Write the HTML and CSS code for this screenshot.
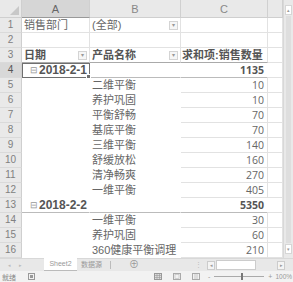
FILE: index.html
```html
<!DOCTYPE html>
<html>
    <head>
        <meta charset="utf-8">
        <title>数据透视表</title>
        <link rel="stylesheet" href="styles.css">
    </head>
    <body>
        <div class="app">
            <div class="main">
                <div class="sheet">
                    <div class="row head">
                        <div class="c num corner"><span class="tri"></span></div>
                        <div class="c a hcol active">A</div>
                        <div class="c b hcol">B</div>
                        <div class="c cc hcol">C</div>
                        <div class="c d hcol"></div>
                    </div>
                    <div class="row">
                        <div class="c num">1</div>
                        <div class="c a">销售部门</div>
                        <div class="c b">(全部)<span class="drop">&#9662;</span></div>
                        <div class="c cc"></div>
                        <div class="c d"></div>
                    </div>
                    <div class="row">
                        <div class="c num">2</div>
                        <div class="c a"></div>
                        <div class="c b"></div>
                        <div class="c cc"></div>
                        <div class="c d"></div>
                    </div>
                    <div class="row pv-head">
                        <div class="c num">3</div>
                        <div class="c a bold">日期<span class="drop">&#9662;</span></div>
                        <div class="c b bold">产品名称<span class="drop">&#9662;</span></div>
                        <div class="c cc bold">求和项:销售数量</div>
                        <div class="c d"></div>
                    </div>
                    <div class="row group">
                        <div class="c num active">4</div>
                        <div class="c a pv sel"><span class="fold">&#8863;</span>2018-2-1<span class="handle"></span></div>
                        <div class="c b pv"></div>
                        <div class="c cc pv val bold">1135</div>
                        <div class="c d"></div>
                    </div>
                    <div class="row">
                        <div class="c num">5</div>
                        <div class="c a pv"></div>
                        <div class="c b pv">二维平衡</div>
                        <div class="c cc val">10</div>
                        <div class="c d"></div>
                    </div>
                    <div class="row">
                        <div class="c num">6</div>
                        <div class="c a pv"></div>
                        <div class="c b pv">养护巩固</div>
                        <div class="c cc val">10</div>
                        <div class="c d"></div>
                    </div>
                    <div class="row">
                        <div class="c num">7</div>
                        <div class="c a pv"></div>
                        <div class="c b pv">平衡舒畅</div>
                        <div class="c cc val">70</div>
                        <div class="c d"></div>
                    </div>
                    <div class="row">
                        <div class="c num">8</div>
                        <div class="c a pv"></div>
                        <div class="c b pv">基底平衡</div>
                        <div class="c cc val">70</div>
                        <div class="c d"></div>
                    </div>
                    <div class="row">
                        <div class="c num">9</div>
                        <div class="c a pv"></div>
                        <div class="c b pv">三维平衡</div>
                        <div class="c cc val">140</div>
                        <div class="c d"></div>
                    </div>
                    <div class="row">
                        <div class="c num">10</div>
                        <div class="c a pv"></div>
                        <div class="c b pv">舒缓放松</div>
                        <div class="c cc val">160</div>
                        <div class="c d"></div>
                    </div>
                    <div class="row">
                        <div class="c num">11</div>
                        <div class="c a pv"></div>
                        <div class="c b pv">清净畅爽</div>
                        <div class="c cc val">270</div>
                        <div class="c d"></div>
                    </div>
                    <div class="row">
                        <div class="c num">12</div>
                        <div class="c a pv"></div>
                        <div class="c b pv">一维平衡</div>
                        <div class="c cc val">405</div>
                        <div class="c d"></div>
                    </div>
                    <div class="row group">
                        <div class="c num">13</div>
                        <div class="c a pv"><span class="fold">&#8863;</span>2018-2-2</div>
                        <div class="c b pv"></div>
                        <div class="c cc pv val bold">5350</div>
                        <div class="c d"></div>
                    </div>
                    <div class="row">
                        <div class="c num">14</div>
                        <div class="c a pv"></div>
                        <div class="c b pv">一维平衡</div>
                        <div class="c cc val">30</div>
                        <div class="c d"></div>
                    </div>
                    <div class="row">
                        <div class="c num">15</div>
                        <div class="c a pv"></div>
                        <div class="c b pv">养护巩固</div>
                        <div class="c cc val">60</div>
                        <div class="c d"></div>
                    </div>
                    <div class="row">
                        <div class="c num">16</div>
                        <div class="c a pv"></div>
                        <div class="c b pv over">360健康平衡调理</div>
                        <div class="c cc val">210</div>
                        <div class="c d"></div>
                    </div>
                </div>
                <div class="vscroll">
                    <div class="sbtn">&#9652;</div>
                    <div class="track"></div>
                    <div class="sbtn">&#9662;</div>
                </div>
            </div>
            <div class="tabs">
                <div class="nav">&#9666;</div>
                <div class="nav">&#9656;</div>
                <div class="tab on">Sheet2</div>
                <div class="tab">数据源</div>
                <div class="add">&#8853;</div>
                <div class="dots">&#8942;</div>
                <div class="hscroll">
                    <div class="hbtn">&#9666;</div>
                    <div class="hthumb"></div>
                    <div class="htrack"></div>
                    <div class="hbtn">&#9656;</div>
                </div>
            </div>
            <div class="status">
                <span class="ready">就绪</span>
                <svg class="rec" width="7" height="7" viewBox="0 0 7 7"><rect x="0.5" y="0.5" width="6" height="6" fill="none" stroke="#999"/><rect x="2" y="2" width="3" height="3" fill="#999"/></svg>
                <div class="views">
                    <svg width="8" height="7" viewBox="0 0 8 7"><rect x="0.5" y="0.5" width="7" height="6" fill="#ddd" stroke="#999"/><path d="M3 0v7M5.5 0v7M0 2.5h8M0 4.5h8" stroke="#999" stroke-width="0.6"/></svg>
                    <svg width="8" height="7" viewBox="0 0 8 7"><rect x="0.5" y="0.5" width="7" height="6" fill="none" stroke="#aaa"/><rect x="2" y="1.5" width="4" height="4" fill="none" stroke="#bbb" stroke-width="0.6"/></svg>
                    <svg width="8" height="7" viewBox="0 0 8 7"><rect x="0.5" y="0.5" width="7" height="6" fill="none" stroke="#aaa"/><path d="M3 0.5v6M5 0.5v6" stroke="#aaa" stroke-width="0.6"/></svg>
                </div>
                <div class="zoom">
                    <span>-</span>
                    <div class="slider"><span class="knob"></span></div>
                    <span>+</span>
                    <span class="pct">100%</span>
                </div>
            </div>
        </div>
    </body>
</html>
```

FILE: styles.css
```css
body {
    margin:0;
    background:#fff;
    font-family:"Liberation Sans", "Noto Sans CJK SC", sans-serif;
    color:#666;
}
.app {
    width:293px;
    height:282px;
    display:flex;
    flex-direction:column;
    overflow:hidden;
}
.main {
    display:flex;
    height:258px;
}
.sheet {
    width:283px;
    overflow:hidden;
}
.row {
    display:flex;
    height:15px;
}
.row.head {
    height:18px;
}
.c {
    box-sizing:border-box;
    height:100%;
    flex:none;
    border-right:1px solid #e2e2e2;
    border-bottom:1px solid #e2e2e2;
    font-size:11px;
    line-height:14px;
    padding:0 2px;
    white-space:nowrap;
    position:relative;
}
.num {
    width:22px;
    background:#e9e9e9;
    border-right:1px solid #cfcfcf;
    border-bottom:1px solid #dadada;
    text-align:center;
    color:#808080;
    font-size:10px;
    padding:0;
}
.num.active {
    background:#d8d8d8;
    color:#555;
}
.a { width:68px; }
.b { width:91px; }
.cc { width:87px; }
.d { width:15px; }
.hcol {
    background:#e9e9e9;
    border-right:1px solid #d0d0d0;
    border-bottom:1px solid #cfcfcf;
    text-align:center;
    color:#888;
    font-size:11px;
    line-height:18px;
}
.hcol.active {
    background:#d6d6d6;
    color:#666;
    border-bottom:1px solid #999;
}
.corner {
    border-bottom:1px solid #cfcfcf;
}
.tri {
    position:absolute;
    right:2px;
    bottom:2px;
    width:0;
    height:0;
    border-left:9px solid transparent;
    border-bottom:9px solid #c8c8c8;
}
.drop {
    position:absolute;
    right:2px;
    top:3px;
    width:7px;
    height:7px;
    border:1px solid #d4d4d4;
    background:#f6f6f6;
    color:#999;
    font-size:6px;
    line-height:7px;
    text-align:center;
    font-weight:normal;
}
.bold {
    font-weight:bold;
    color:#555;
}
.pv-head .c.a,
.pv-head .c.b,
.pv-head .c.cc {
    border-bottom:1px solid #aaa;
}
.pv-head .cc {
    padding-left:1px;
}
.pv {
    border-right-color:#fff;
    border-bottom-color:#fff;
}
.b.pv {
    padding-left:2px;
}
.over {
    overflow:visible;
    z-index:1;
}
.val {
    text-align:right;
    padding-right:3px;
    font-family:"Open Sans", "Liberation Sans", sans-serif;
    font-size:10.5px;
    color:#666;
}
.group .c.a,
.group .c.b,
.group .c.cc {
    border-bottom:1px solid #bbb;
    font-weight:bold;
    color:#555;
}
.group .c.cc {
    font-size:10.5px;
}
.group .c.a {
    padding-left:8px;
    font-size:12px;
    overflow:visible;
}
.fold {
    font-weight:normal;
    color:#999;
    font-size:9px;
    margin-right:1px;
    vertical-align:1px;
}
.sel {
    outline:1px solid #6f6f6f;
    outline-offset:-1px;
    z-index:2;
}
.handle {
    position:absolute;
    right:-2px;
    bottom:-2px;
    width:3px;
    height:3px;
    background:#6f6f6f;
    border:1px solid #fff;
}
.vscroll {
    width:10px;
    background:#e9e9e9;
    border-left:1px solid #d8d8d8;
    display:flex;
    flex-direction:column;
    padding:5px 1px 4px 1px;
    box-sizing:border-box;
}
.sbtn {
    height:8px;
    background:#fff;
    border:1px solid #d6d6d6;
    font-size:5px;
    line-height:8px;
    text-align:center;
    color:#999;
}
.track {
    flex:1;
    background:#dedede;
    margin:1px 1px;
}
.tabs {
    height:13px;
    background:#e8e8e8;
    display:flex;
    align-items:stretch;
    border-top:1px solid #d8d8d8;
    box-sizing:border-box;
    font-size:7px;
    color:#999;
}
.nav {
    width:9px;
    margin-left:5px;
    text-align:center;
    line-height:12px;
    color:#bbb;
    font-size:5px;
}
.nav + .nav {
    margin-left:2px;
    margin-right:19px;
}
.tab {
    padding:0 4px;
    line-height:12px;
    font-family:"Liberation Sans", "Noto Sans CJK SC", sans-serif;
}
.tab.on {
    background:#fff;
    width:33px;
    text-align:center;
    margin-top:-1px;
    box-sizing:border-box;
    color:#999;
    border-bottom:1px solid #bbb;
}
.tab + .tab {
    border-right:1px solid #bbb;
    margin:2px 0;
    line-height:8px;
    padding:0 8px 0 4px;
}
.add {
    margin-left:18px;
    font-size:10px;
    line-height:12px;
    color:#999;
}
.dots {
    margin-left:56px;
    line-height:12px;
    color:#bbb;
}
.hscroll {
    margin-left:5px;
    display:flex;
    align-items:center;
    width:78px;
}
.hbtn {
    width:6px;
    height:7px;
    border:1px solid #ccc;
    background:#f4f4f4;
    font-size:5px;
    line-height:7px;
    text-align:center;
    color:#999;
}
.hthumb {
    width:38px;
    height:8px;
    background:#fff;
    border:1px solid #ccc;
    margin-left:1px;
}
.htrack {
    flex:1;
    height:8px;
}
.status {
    flex:1;
    background:#f2f2f2;
    display:flex;
    align-items:center;
    font-size:7px;
    color:#888;
}
.ready {
    margin-left:2px;
    font-family:"Noto Sans CJK SC", sans-serif;
}
.rec {
    margin-left:12px;
}
.views {
    margin-left:119px;
    display:flex;
    gap:11px;
}
.zoom {
    display:flex;
    align-items:center;
    margin-left:8px;
    color:#999;
}
.slider {
    width:50px;
    height:1px;
    background:#aaa;
    margin:0 4px;
    position:relative;
}
.knob {
    position:absolute;
    left:27px;
    top:-3px;
    width:2px;
    height:7px;
    background:#777;
}
.pct {
    margin-left:3px;
    font-size:6.5px;
}
```
